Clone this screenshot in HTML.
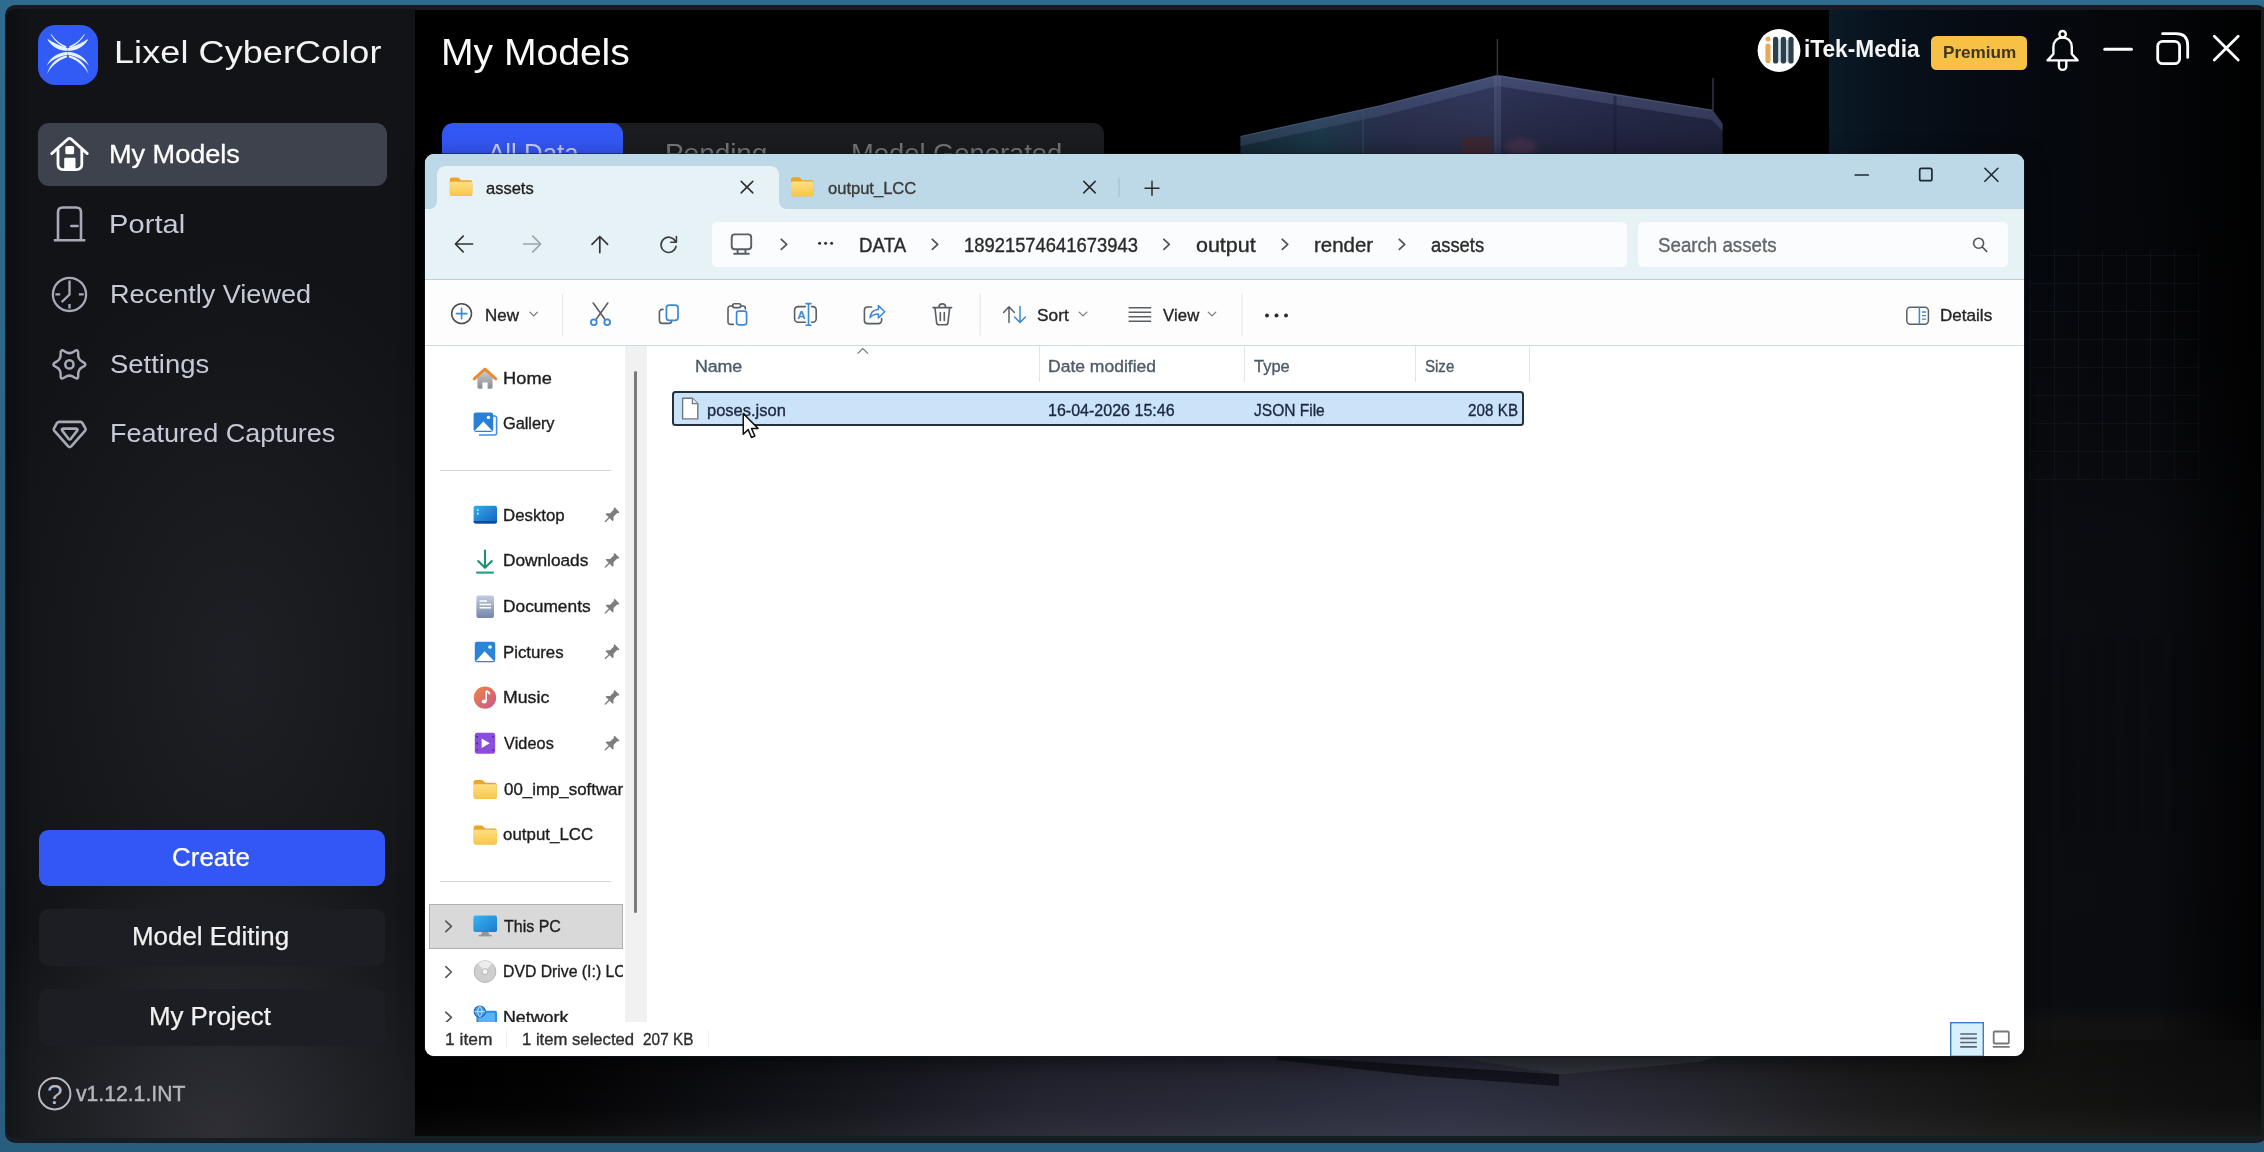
<!DOCTYPE html>
<html lang="en">
<head>
<meta charset="utf-8">
<title>Lixel CyberColor - My Models</title>
<style>
*{box-sizing:border-box;margin:0;padding:0}
html,body{width:2264px;height:1152px;overflow:hidden}
body{position:relative;background:linear-gradient(180deg,#2f6b8e 0,#2c6588 40%,#295d7d 100%);font-family:"Liberation Sans",sans-serif;}
.abs{position:absolute}
.t{position:absolute;white-space:nowrap;line-height:normal;font-family:"Liberation Sans",sans-serif}
svg{position:absolute;overflow:visible}
#ex .t{-webkit-text-stroke:.36px}
/* ---------- explorer ---------- */
#ex{position:absolute;left:425px;top:154.3px;width:1599.2px;height:901.6px;border-radius:9px;background:#fff;overflow:hidden;box-shadow:0 0 0 1px rgba(20,30,40,.55),0 6px 22px rgba(0,0,0,.55)}
</style>
</head>
<body>
<!-- ================= Lixel CyberColor application window ================= -->
<div id="frame" class="abs" style="left:5px;top:5px;width:2262px;height:1138px;border-radius:10px;background:#171c22"></div>
<div id="side" class="abs" style="left:6px;top:9px;width:409px;height:1129px;border-radius:9px 0 0 9px;background:#121317;overflow:hidden"><div class="abs" style="left:-6px;top:-9px;width:2264px;height:1152px">
<div class="abs" style="left:6px;top:9px;width:409px;height:1129px;background:radial-gradient(ellipse 270px 300px at 215px 1129px,rgba(76,76,84,.5),rgba(76,76,84,0) 100%),radial-gradient(ellipse 260px 420px at 230px 660px,rgba(60,61,68,.3),rgba(60,61,68,0) 100%),linear-gradient(90deg,rgba(0,0,0,.25),rgba(0,0,0,0) 30px)"></div>
<div class="abs" style="left:38px;top:123.4px;width:349px;height:62.8px;border-radius:11px;background:#3e424c"></div>
<div class="abs" style="left:38.5px;top:829.6px;width:346px;height:56.6px;border-radius:9.5px;background:#3357f4"></div>
<div class="abs" style="left:38.5px;top:909px;width:346px;height:56.6px;border-radius:9.5px;background:#1d1e23"></div>
<div class="abs" style="left:38.5px;top:989px;width:346px;height:56.6px;border-radius:9.5px;background:#1d1e23"></div>
<span class="t" style="left:114.1px;top:35.4px;font-size:31px;color:#f3f3f3;letter-spacing:0.09px;transform:scaleX(1.16);transform-origin:0 0">Lixel CyberColor</span>
<span class="t" style="left:109.1px;top:140.0px;font-size:25px;color:#ffffff;letter-spacing:-0.02px;-webkit-text-stroke:.3px #fff;transform:scaleX(1.084);transform-origin:0 0">My Models</span>
<span class="t" style="left:109.1px;top:210.2px;font-size:25px;color:#c6cad7;letter-spacing:0.09px;transform:scaleX(1.16);transform-origin:0 0">Portal</span>
<span class="t" style="left:109.5px;top:279.6px;font-size:25px;color:#c6cad7;letter-spacing:-0.02px;transform:scaleX(1.084);transform-origin:0 0">Recently Viewed</span>
<span class="t" style="left:109.8px;top:349.6px;font-size:25px;color:#c6cad7;transform:scaleX(1.098);transform-origin:0 0">Settings</span>
<span class="t" style="left:109.5px;top:419.0px;font-size:25px;color:#c6cad7;letter-spacing:-0.01px;transform:scaleX(1.082);transform-origin:0 0">Featured Captures</span>
<span class="t" style="left:172.2px;top:843.1px;font-size:25.5px;color:#ffffff;letter-spacing:0.02px;-webkit-text-stroke:.25px;transform:scaleX(1.017);transform-origin:0 0">Create</span>
<span class="t" style="left:132.4px;top:922.1px;font-size:25.5px;color:#f1f1f1;letter-spacing:0.01px;-webkit-text-stroke:.25px;transform:scaleX(1.016);transform-origin:0 0">Model Editing</span>
<span class="t" style="left:149.1px;top:1001.5px;font-size:25.5px;color:#f1f1f1;letter-spacing:-0.02px;-webkit-text-stroke:.25px;transform:scaleX(1.014);transform-origin:0 0">My Project</span>
<span class="t" style="left:76.3px;top:1081.1px;font-size:22.5px;color:#b3b6bf;-webkit-text-stroke:.45px #b3b6bf;transform:scaleX(0.94);transform-origin:0 0">v1.12.1.INT</span>
</div></div>
<div id="main" class="abs" style="left:415px;top:10px;width:1846px;height:1126px;background:#000;overflow:hidden"><div class="abs" style="left:-415px;top:-10px;width:2264px;height:1152px">
<div class="abs" style="left:1829px;top:10px;width:432px;height:1126px;background:linear-gradient(90deg,#0b1a27 0,#08121c 12%,#060b12 35%,#05070b 65%,#030405 100%)"></div>
<div class="abs" style="left:1829px;top:10px;width:432px;height:1126px;background:linear-gradient(180deg,rgba(0,0,0,0) 0,rgba(0,0,0,0) 14%,rgba(8,8,11,.5) 40%,rgba(12,12,14,.62) 100%)"></div>
<div class="abs" style="left:2030px;top:250px;width:170px;height:230px;opacity:.5;background:repeating-linear-gradient(90deg,rgba(40,48,58,.55) 0 1px,rgba(0,0,0,0) 1px 24px),repeating-linear-gradient(0deg,rgba(40,48,58,.55) 0 1px,rgba(0,0,0,0) 1px 28px);filter:blur(.6px)"></div>
<div class="abs" style="left:2024px;top:330px;width:237px;height:725px;background:linear-gradient(180deg,rgba(16,18,24,0) 0,rgba(16,18,24,.2) 16%,rgba(16,18,24,.45) 30%,rgba(13,15,20,.45) 93%,rgba(19,19,18,.9) 96%,rgba(19,19,18,.9) 100%)"></div>
<div class="abs" style="left:2040px;top:640px;width:150px;height:190px;opacity:.22;background:repeating-linear-gradient(90deg,rgba(8,8,10,.9) 0 9px,rgba(0,0,0,0) 9px 22px);filter:blur(1.5px)"></div>
<div class="abs" style="left:2150px;top:10px;width:111px;height:1126px;background:linear-gradient(90deg,rgba(0,0,0,0),rgba(0,0,0,.35) 45%,rgba(0,0,0,.8))"></div>
<div class="abs" style="left:415px;top:1040px;width:1846px;height:96px;background:linear-gradient(90deg,#000 0,#040405 8%,#101116 18%,#1a1b23 26%,#252632 34%,#2b2c3a 45%,#303244 56%,#2c2d3a 64%,#27282f 71%,#1e1e20 78%,#161615 86%,#0e0e0e 100%)"></div>
<div class="abs" style="left:415px;top:1040px;width:1846px;height:96px;background:linear-gradient(180deg,rgba(0,0,0,.22) 0,rgba(0,0,0,.15) 30%,rgba(0,0,0,.03) 70%,rgba(255,255,255,.035) 100%)"></div>
<svg width="2264" height="1152" viewBox="0 0 2264 1152" style="left:0;top:0;filter:blur(.7px)"><defs><linearGradient id="bg1" x1="1240" y1="0" x2="1498" y2="0" gradientUnits="userSpaceOnUse"><stop offset="0" stop-color="#1a3646"/><stop offset=".3" stop-color="#22465a"/><stop offset=".48" stop-color="#2c3a58"/><stop offset=".62" stop-color="#31375a"/><stop offset="1" stop-color="#343b5f"/></linearGradient><linearGradient id="bg2" x1="1498" y1="0" x2="1724" y2="0" gradientUnits="userSpaceOnUse"><stop offset="0" stop-color="#2f3558"/><stop offset=".5" stop-color="#2a2e50"/><stop offset="1" stop-color="#262a48"/></linearGradient><linearGradient id="fade" x1="0" y1="76" x2="0" y2="156" gradientUnits="userSpaceOnUse"><stop offset="0" stop-color="#000" stop-opacity="0"/><stop offset="1" stop-color="#000" stop-opacity=".28"/></linearGradient></defs><path d="M1240.5,156 V136.5 L1381,105.5 L1497.4,75.4 V156 Z" fill="url(#bg1)"/><path d="M1497.4,75.4 L1713,110.4 L1722.5,123.5 V156 H1497.4 Z" fill="url(#bg2)"/><path d="M1240.5,136.5 L1381,105.5 L1497.4,75.4 V86 L1381,116 L1240.5,146 Z" fill="#5d6f9c" opacity=".38"/><path d="M1497.4,75.4 L1713,110.4 L1722.5,123.5 V131 L1712,120 L1497.4,86 Z" fill="#6a74a2" opacity=".34"/><path d="M1240.5,136.5 L1381,105.5 L1497.4,75.4 L1713,110.4" fill="none" stroke="#6f7fa6" stroke-width="1.2" opacity=".55"/><path d="M1494,76 h7 V156 h-7z" fill="#59628a" opacity=".5"/><path d="M1615,96 v60" stroke="#1f2340" stroke-width="3" opacity=".6"/><path d="M1363,110 v46" stroke="#3b6078" stroke-width="2" opacity=".5"/><path d="M1240.5,156 V136.5 L1381,105.5 L1497.4,75.4 L1713,110.4 L1722.5,123.5 V156 Z" fill="url(#fade)"/><path d="M1497.4,39 V76 M1713,78 V111" stroke="#30323f" stroke-width="1.6"/><rect x="1462" y="137" width="30" height="19" fill="#3b2733"/><ellipse cx="1521" cy="147" rx="16" ry="9" fill="#6a3a52" opacity=".4" style="filter:blur(3px)"/><path d="M1277,1056 L1559,1074.5 V1086 L1420,1076 L1277,1060 Z" fill="#13141c"/><path d="M1440,1055 H1720 L1700,1062 L1561,1074.5 Z" fill="#353a40" opacity=".75"/></svg>
<div class="abs" style="left:442.4px;top:123.3px;width:661.6px;height:74px;border-radius:11px;background:#1b1c1f;overflow:hidden"><div class="abs" style="left:0;top:0;width:181px;height:74px;border-radius:11px;background:#3357f3"></div></div>
<div class="abs" style="left:1931.4px;top:36.4px;width:95.6px;height:34px;border-radius:5.5px;background:#f6c144"></div>
<span class="t" style="left:440.5px;top:31.5px;font-size:36px;color:#fbfbfb;letter-spacing:-0.02px;transform:scaleX(1.086);transform-origin:0 0">My Models</span>
<span class="t" style="left:487.7px;top:139.2px;font-size:25px;color:#c6cfff;letter-spacing:0.01px;transform:scaleX(1.035);transform-origin:0 0">All Data</span>
<span class="t" style="left:664.5px;top:139.2px;font-size:25px;color:#74767c;letter-spacing:-0.08px;transform:scaleX(1.122);transform-origin:0 0">Pending</span>
<span class="t" style="left:851.0px;top:139.2px;font-size:25px;color:#74767c;letter-spacing:-0.02px;transform:scaleX(1.095);transform-origin:0 0">Model Generated</span>
<span class="t" style="left:1804.2px;top:36.0px;font-size:23.5px;color:#f4f4f4;font-weight:700;transform:scaleX(0.966);transform-origin:0 0">iTek-Media</span>
<span class="t" style="left:1942.5px;top:43.4px;font-size:16.3px;color:#3d3521;font-weight:700;letter-spacing:-0.01px;transform:scaleX(1.053);transform-origin:0 0">Premium</span>
</div></div>
<!-- app icons -->
<svg width="2264" height="1152" viewBox="0 0 2264 1152" style="left:0;top:0">
<rect x="38" y="25" width="60" height="60" rx="17.5" fill="#325bf6"/><path d="M67.7,50.7 C61,51.4 52.6,47.9 47.4,39.6 L48.2,39.2 C52.4,42.2 58.5,45 67.7,48.2 Z" fill="#e6f2ff"/><path d="M67.90,50.70 C74.60,51.40 83.00,47.90 88.20,39.60 L87.40,39.20 C83.20,42.20 77.10,45.00 67.90,48.20 Z" fill="#e6f2ff"/><path d="M66,48.1 C60,45.6 54.6,41.2 50.7,34.6 L51.6,34.2 C55,39.6 59.6,43.4 66.4,46.2 Z" fill="#e6f2ff"/><path d="M69.60,48.10 C75.60,45.60 81.00,41.20 84.90,34.60 L84.00,34.20 C80.60,39.60 76.00,43.40 69.20,46.20 Z" fill="#e6f2ff"/><path d="M67.7,51.9 C58.5,52.1 50,57 46.7,65.8 C51,60.4 57.4,56.8 67.7,54.8 Z" fill="#e6f2ff"/><path d="M67.90,51.90 C77.10,52.10 85.60,57.00 88.90,65.80 C84.60,60.40 78.20,56.80 67.90,54.80 Z" fill="#e6f2ff"/><path d="M66.6,55.2 C57.6,57.1 50,63.3 47.1,74 C50.9,66.7 57,60.6 67,57.2 Z" fill="#e6f2ff"/><path d="M69.00,55.20 C78.00,57.10 85.60,63.30 88.50,74.00 C84.70,66.70 78.60,60.60 68.60,57.20 Z" fill="#e6f2ff"/>
<g fill="none" stroke="#fdfdff" stroke-width="2.8" stroke-linecap="round" stroke-linejoin="round"><path d="M51.7,153.6 L67.6,139.2 Q69.5,137.6 71.4,139.2 L87.3,153.6"/><path d="M58,149.5 V164.5 Q58,169.6 63.2,169.6 H76 Q81.8,169.6 81.8,164.5 V149.5"/></g><rect x="65.3" y="146" width="8.8" height="8.3" rx="1.6" fill="#fdfdff"/><rect x="64.2" y="157.7" width="11.3" height="12.6" rx="1" fill="#fdfdff"/>
<g fill="none" stroke="#a6a9b6" stroke-width="2.6" stroke-linecap="butt" stroke-linejoin="round"><path d="M58,240 V212.2 Q58,207.5 62.7,207.5 H76.3 Q81,207.5 81,212.2 V240"/><path d="M53.8,240.3 H85.3"/><path d="M71.3,226 H77.6" stroke-width="2.4" stroke-linecap="round"/></g>
<g fill="none" stroke="#a6a9b6" stroke-width="2.3" stroke-linecap="butt" stroke-linejoin="miter"><circle cx="69.5" cy="294.4" r="16.6"/><path d="M69.5,280.4 V294.6 L61.6,302.2"/><path d="M55.4,294.4 H60.2 M78.9,294.4 H83.7 M69.5,304 V308.6"/></g>
<g fill="none" stroke="#a6a9b6" stroke-width="2.5" stroke-linejoin="round"><path d="M82.9,362.0 Q88.0,364.4 82.9,366.8 Q77.7,369.2 78.2,374.9 Q78.7,380.5 74.1,377.3 Q69.4,374.0 64.8,377.3 Q60.1,380.5 60.6,374.9 Q61.1,369.2 55.9,366.8 Q50.8,364.4 55.9,362.0 Q61.1,359.6 60.6,353.9 Q60.1,348.3 64.8,351.5 Q69.4,354.8 74.1,351.5 Q78.7,348.3 78.2,353.9 Q77.7,359.6 82.9,362.0 Z"/><circle cx="69.4" cy="364.4" r="4.1"/></g>
<g fill="none" stroke="#a6a9b6" stroke-width="2.6" stroke-linejoin="round" stroke-linecap="round"><path d="M59,421.9 H80.4 Q81.6,421.9 82.4,423 L85.4,428.4 Q86,429.6 85.2,430.6 L71.2,446.4 Q69.7,447.8 68.2,446.4 L54.2,430.6 Q53.4,429.6 54,428.4 L57,423 Q57.8,421.9 59,421.9 Z"/><path d="M63.2,428.6 H76.2 Q78.2,428.8 77.2,430.6 L70.9,438.8 Q69.7,440.2 68.5,438.8 L62.2,430.6 Q61.2,428.8 63.2,428.6 Z"/></g>
<circle cx="54.7" cy="1093.7" r="15.7" fill="none" stroke="#b9bbc3" stroke-width="2"/><text x="54.9" y="1103.8" text-anchor="middle" font-family="Liberation Sans, sans-serif" font-size="28" fill="#b9bbc3">?</text>
<circle cx="1779" cy="50.5" r="21.4" fill="#fff"/><rect x="1777.6" y="40" width="3.6" height="22" fill="#d3e6f1"/><rect x="1785.6" y="40" width="3.2" height="22" fill="#c3d4de"/><rect x="1765.4" y="43.4" width="5.2" height="19.9" rx="2.4" fill="#e2ab5e"/><circle cx="1768" cy="38.9" r="2.5" fill="#e2ab5e"/><rect x="1773" y="36.7" width="5.2" height="26.8" rx="2.6" fill="#2e3f4c"/><rect x="1780.8" y="36.7" width="5.2" height="26.8" rx="2.6" fill="#2e3f4c"/><rect x="1788.4" y="36.7" width="5.2" height="26.8" rx="2.6" fill="#2e3f4c"/>
<g fill="none" stroke="#fff" stroke-width="2.4" stroke-linejoin="round" stroke-linecap="round"><circle cx="2062.6" cy="34.2" r="3.2"/><path d="M2053.4,54 V47 C2053.4,41.6 2057,37.6 2062.6,37.6 C2068.2,37.6 2071.8,41.6 2071.8,47 V54 L2077.6,60.4 H2047.6 Z"/><path d="M2058.9,61 V66.2 a3.7,3.7 0 0 0 7.4,0 V61"/></g>
<g fill="none" stroke="#fff" stroke-width="2.8" stroke-linecap="round"><path d="M2104.8,49.3 H2131.4" stroke-width="3"/><rect x="2157.7" y="41.4" width="21.9" height="22.3" rx="5"/><path d="M2162.6,33.7 H2176 Q2187.7,33.7 2187.7,45.5 V57.4"/><path d="M2214.3,36.3 L2238.2,59.9 M2238.2,36.3 L2214.3,59.9"/></g>
</svg>
<!-- ================= File Explorer window ================= -->
<div id="ex"><div class="abs" style="left:-425px;top:-154.3px;width:2264px;height:1152px">
<div class="abs" style="left:425px;top:154px;width:1599px;height:55.4px;background:#bdd9e7"></div>
<div class="abs" style="left:425px;top:209px;width:1599px;height:70.4px;background:#e7f2f7"></div>
<div class="abs" style="left:436.6px;top:166px;width:342px;height:44px;border-radius:8.5px 8.5px 0 0;background:#e7f2f7"></div>
<div class="abs" style="left:428.6px;top:201px;width:8px;height:8.4px;background:radial-gradient(circle at 0 0,rgba(231,242,247,0) 7.6px,#e7f2f7 8.4px)"></div>
<div class="abs" style="left:778.6px;top:201px;width:8px;height:8.4px;background:radial-gradient(circle at 100% 0,rgba(231,242,247,0) 7.6px,#e7f2f7 8.4px)"></div>
<div class="abs" style="left:425px;top:278.8px;width:1599px;height:1.4px;background:#bccfd9"></div>
<div class="abs" style="left:711.6px;top:222.3px;width:915px;height:44.4px;border-radius:5px;background:#fafcfd"></div>
<div class="abs" style="left:1638px;top:222.3px;width:370px;height:44.4px;border-radius:5px;background:#fafcfd"></div>
<div class="abs" style="left:425px;top:280.2px;width:1599px;height:65.4px;background:#fdfdfd"></div>
<div class="abs" style="left:425px;top:345.2px;width:1599px;height:1.2px;background:#cfd9df"></div>
<div class="abs" style="left:625px;top:346.4px;width:22.4px;height:675.6px;background:#f1f1f1"></div>
<div class="abs" style="left:634.2px;top:371px;width:3.2px;height:542px;border-radius:1.6px;background:#7b7b7b"></div>
<div class="abs" style="left:439.6px;top:469.8px;width:171.6px;height:1.2px;background:#d4d4d4"></div>
<div class="abs" style="left:439.6px;top:880.6px;width:171.6px;height:1.2px;background:#d4d4d4"></div>
<div class="abs" style="left:428.6px;top:903.6px;width:194.6px;height:45px;background:#d9d9d9;border:1.2px solid #b0b0b0"></div>
<div class="abs" style="left:1039.2px;top:346.4px;width:1.2px;height:36px;background:#e2e5e8"></div><div class="abs" style="left:1244px;top:346.4px;width:1.2px;height:36px;background:#e2e5e8"></div><div class="abs" style="left:1415px;top:346.4px;width:1.2px;height:36px;background:#e2e5e8"></div><div class="abs" style="left:1529px;top:346.4px;width:1.2px;height:36px;background:#e2e5e8"></div>
<div class="abs" style="left:672.4px;top:391.2px;width:852px;height:34.6px;border-radius:3.5px;background:#cbe3f8;border:2px solid #27313d"></div>
<div id="navpane" class="abs" style="left:425px;top:346.4px;width:198.4px;height:675.6px;overflow:hidden"><div class="abs" style="left:-425px;top:-346.4px;width:2264px;height:1152px">
<span class="t" style="left:502.7px;top:368.0px;font-size:17.4px;color:#1d1d1d;letter-spacing:0.06px;transform:scaleX(1.047);transform-origin:0 0">Home</span>
<span class="t" style="left:503.3px;top:413.4px;font-size:17.4px;color:#1d1d1d;letter-spacing:-0.05px;transform:scaleX(0.941);transform-origin:0 0">Gallery</span>
<span class="t" style="left:503.0px;top:504.6px;font-size:17.4px;color:#1d1d1d;letter-spacing:-0.02px;transform:scaleX(0.968);transform-origin:0 0">Desktop</span>
<span class="t" style="left:502.7px;top:550.2px;font-size:17.4px;color:#1d1d1d;letter-spacing:-0.03px;transform:scaleX(0.994);transform-origin:0 0">Downloads</span>
<span class="t" style="left:502.7px;top:596.1px;font-size:17.4px;color:#1d1d1d;letter-spacing:-0.01px;transform:scaleX(0.997);transform-origin:0 0">Documents</span>
<span class="t" style="left:503.0px;top:641.6px;font-size:17.4px;color:#1d1d1d;letter-spacing:-0.02px;transform:scaleX(0.966);transform-origin:0 0">Pictures</span>
<span class="t" style="left:502.7px;top:687.2px;font-size:17.4px;color:#1d1d1d;letter-spacing:0.01px;transform:scaleX(1.017);transform-origin:0 0">Music</span>
<span class="t" style="left:503.8px;top:732.9px;font-size:17.4px;color:#1d1d1d;letter-spacing:0.08px;transform:scaleX(0.936);transform-origin:0 0">Videos</span>
<span class="t" style="left:503.5px;top:778.6px;font-size:17.4px;color:#1d1d1d;letter-spacing:-0.01px;transform:scaleX(0.971);transform-origin:0 0">00_imp_software</span>
<span class="t" style="left:503.4px;top:824.3px;font-size:17.4px;color:#1d1d1d;letter-spacing:0.04px;transform:scaleX(0.968);transform-origin:0 0">output_LCC</span>
<span class="t" style="left:503.7px;top:915.8px;font-size:17.4px;color:#1d1d1d;letter-spacing:0.01px;transform:scaleX(0.919);transform-origin:0 0">This PC</span>
<span class="t" style="left:503.1px;top:961.4px;font-size:17.4px;color:#1d1d1d;letter-spacing:-0.01px;transform:scaleX(0.908);transform-origin:0 0">DVD Drive (I:) LC</span>
<span class="t" style="left:502.7px;top:1006.8px;font-size:17.4px;color:#1d1d1d;letter-spacing:-0.03px;transform:scaleX(1.027);transform-origin:0 0">Network</span>
</div></div>
<svg width="2264" height="1152" viewBox="0 0 2264 1152" style="left:0;top:0">
<defs><linearGradient id="fgrad" x1="0" y1="0" x2="0" y2="1"><stop offset="0" stop-color="#ffe083"/><stop offset="1" stop-color="#f8c646"/></linearGradient><linearGradient id="dgrad" x1="0" y1="0" x2="1" y2="1"><stop offset="0" stop-color="#2fb0ee"/><stop offset="1" stop-color="#155fba"/></linearGradient><linearGradient id="docgrad" x1="0" y1="0" x2="0" y2="1"><stop offset="0" stop-color="#c2cde0"/><stop offset="1" stop-color="#7485a8"/></linearGradient><linearGradient id="mgrad" x1="0" y1="0" x2="1" y2="1"><stop offset="0" stop-color="#ee8744"/><stop offset="1" stop-color="#c9558f"/></linearGradient><linearGradient id="hgrad" x1="0" y1="0" x2="0" y2="1"><stop offset="0" stop-color="#c9cdd2"/><stop offset="1" stop-color="#878c93"/></linearGradient><linearGradient id="pcgrad" x1="0" y1="0" x2="1" y2="1"><stop offset="0" stop-color="#37b6ee"/><stop offset="1" stop-color="#1b78d0"/></linearGradient></defs>
<g transform="translate(449.8,177.1) scale(0.978,1.000)"><path d="M0,2.6 Q0,0.4 2.2,0.4 H7.6 Q8.8,0.4 9.6,1.2 L11.6,3.2 H20.8 Q23,3.2 23,5.4 V16.6 Q23,19 20.8,19 H2.2 Q0,19 0,16.6 Z" fill="#e9a62d"/><rect x="0" y="4.6" width="23" height="14.4" rx="1.8" fill="url(#fgrad)"/></g><g transform="translate(791.0,176.9) scale(0.983,1.016)"><path d="M0,2.6 Q0,0.4 2.2,0.4 H7.6 Q8.8,0.4 9.6,1.2 L11.6,3.2 H20.8 Q23,3.2 23,5.4 V16.6 Q23,19 20.8,19 H2.2 Q0,19 0,16.6 Z" fill="#e9a62d"/><rect x="0" y="4.6" width="23" height="14.4" rx="1.8" fill="url(#fgrad)"/></g>
<path d="M741.2,181.4 L752.8,192.9 M752.8,181.4 L741.2,192.9" stroke="#2b2b2b" stroke-width="1.5" stroke-linecap="round"/><path d="M1083.8,181.4 L1095.2,192.9 M1095.2,181.4 L1083.8,192.9" stroke="#2b2b2b" stroke-width="1.5" stroke-linecap="round"/><path d="M1119,178 V197" stroke="#9fbccb" stroke-width="1"/><path d="M1145,188.2 H1159 M1152,181.2 V195.2" stroke="#2b2b2b" stroke-width="1.5" stroke-linecap="round"/>
<path d="M1855.2,175 H1868.4" stroke="#1f2830" stroke-width="1.6" stroke-linecap="round"/><rect x="1919.7" y="168.3" width="12.2" height="12.4" rx="1.8" fill="none" stroke="#1f2830" stroke-width="1.7"/><path d="M1984.9,168.3 L1997.9,181.3 M1997.9,168.3 L1984.9,181.3" stroke="#1f2830" stroke-width="1.6" stroke-linecap="round"/>
<g fill="none" stroke-width="1.7" stroke-linecap="round" stroke-linejoin="round"><path d="M472.6,244 H455.6 M463.2,236.2 L455.4,244 L463.2,251.8" stroke="#333"/><path d="M523.6,244 H540.4 M532.8,236.2 L540.6,244 L532.8,251.8" stroke="#9aa4aa"/><path d="M599.8,252.6 V236.6 M592,244.4 L599.8,236.5 L607.6,244.4" stroke="#333"/><path d="M675.7,242 A7.6,7.6 0 1 0 676.1,246.2 M676.4,236.6 V242.2 H670.8" stroke="#3d3d3d" stroke-width="1.6"/></g>
<g fill="none" stroke="#5a5e62" stroke-width="1.9" stroke-linejoin="round"><rect x="731.7" y="234.4" width="19.5" height="14.9" rx="3"/><path d="M737.6,249.6 V253.4 M745.4,249.6 V253.4"/><path d="M734.2,253.7 H748.8" stroke-linecap="round"/></g>
<path d="M781.3,239.3 L786.7,244.3 L781.3,249.3" fill="none" stroke="#555" stroke-width="1.8" stroke-linecap="round" stroke-linejoin="round"/><path d="M932.3,239.3 L937.7,244.3 L932.3,249.3" fill="none" stroke="#555" stroke-width="1.8" stroke-linecap="round" stroke-linejoin="round"/><path d="M1163.9,239.3 L1169.3,244.3 L1163.9,249.3" fill="none" stroke="#555" stroke-width="1.8" stroke-linecap="round" stroke-linejoin="round"/><path d="M1282.3,239.3 L1287.7,244.3 L1282.3,249.3" fill="none" stroke="#555" stroke-width="1.8" stroke-linecap="round" stroke-linejoin="round"/><path d="M1399.3,239.3 L1404.7,244.3 L1399.3,249.3" fill="none" stroke="#555" stroke-width="1.8" stroke-linecap="round" stroke-linejoin="round"/><circle cx="819.6" cy="243.2" r="1.5" fill="#333"/><circle cx="825.6" cy="243.2" r="1.5" fill="#333"/><circle cx="831.6" cy="243.2" r="1.5" fill="#333"/>
<g fill="none" stroke="#555" stroke-width="1.6" stroke-linecap="round"><circle cx="1978.6" cy="243.2" r="5"/><path d="M1982.3,247 L1986.6,251.4"/></g>
<circle cx="461.6" cy="313.6" r="9.9" fill="none" stroke="#4b4b4b" stroke-width="1.5"/><path d="M456.4,313.6 H466.8 M461.6,308.4 V318.8" stroke="#3b88d6" stroke-width="1.6" stroke-linecap="round"/><path d="M529.9,312.1 L533.7,315.9 L537.5,312.1" fill="none" stroke="#7a7a7a" stroke-width="1.3" stroke-linecap="round" stroke-linejoin="round"/><path d="M1079.2,312.1 L1083.0,315.9 L1086.8,312.1" fill="none" stroke="#7a7a7a" stroke-width="1.3" stroke-linecap="round" stroke-linejoin="round"/><path d="M1208.2,312.1 L1212.0,315.9 L1215.8,312.1" fill="none" stroke="#7a7a7a" stroke-width="1.3" stroke-linecap="round" stroke-linejoin="round"/><path d="M562.6,294 V335.5" stroke="#e4e4e4" stroke-width="1"/><path d="M980.2,294 V335.5" stroke="#e4e4e4" stroke-width="1"/><path d="M1242,294 V335.5" stroke="#e4e4e4" stroke-width="1"/>
<g fill="none" stroke-linecap="round" stroke-linejoin="round" stroke-width="1.6"><path d="M593.2,303 L605.4,320 M607.8,303 L595.6,320" stroke="#5a5f64"/><circle cx="593.8" cy="322.2" r="2.9" stroke="#3b88d6" stroke-width="1.8"/><circle cx="607.2" cy="322.2" r="2.9" stroke="#3b88d6" stroke-width="1.8"/><path d="M663,309.4 H662.2 A2.8,2.8 0 0 0 659.4,312.2 V320.6 A2.8,2.8 0 0 0 662.2,323.4 H669 A2.8,2.8 0 0 0 671.6,321.6" stroke="#5a5f64"/><rect x="666.4" y="305.2" width="11.6" height="15.2" rx="2.8" stroke="#3b88d6" stroke-width="1.7"/><path d="M733,306 H730.4 A2.4,2.4 0 0 0 728,308.4 V322 A2.4,2.4 0 0 0 730.4,324.4 H733.4 M740.6,306 H743 A2.4,2.4 0 0 1 745.4,308.4 V309" stroke="#5a5f64"/><rect x="732.6" y="303.8" width="8.2" height="3.8" rx="1.8" stroke="#5a5f64"/><rect x="736.6" y="311.2" width="10" height="13.6" rx="2.2" stroke="#3b88d6" stroke-width="1.7" fill="#fff"/><path d="M805.4,306.6 H798 A3.4,3.4 0 0 0 794.6,310 V318.8 A3.4,3.4 0 0 0 798,322.2 H805.4 M811.6,306.6 H812.8 A3.4,3.4 0 0 1 816.2,310 V318.8 A3.4,3.4 0 0 1 812.8,322.2 H811.6" stroke="#5a5f64"/><path d="M808.5,304 V324.8 M806,303.6 H811 M806,325.2 H811" stroke="#3b88d6"/><path d="M871.6,307 H867.6 A3.2,3.2 0 0 0 864.4,310.2 V320.4 A3.2,3.2 0 0 0 867.6,323.6 H878.4 A3.2,3.2 0 0 0 881.6,320.4 V318.6" stroke="#5a5f64"/><path d="M870,317.6 C870.6,312.4 874,309.8 878.4,309.6 V305.6 L884.6,311.8 L878.4,318 V314 C874.6,314 872.2,315 870,317.6 Z" stroke="#3b88d6" stroke-width="1.5"/><path d="M933,307.6 H951.6 M939,307.2 A3.3,3.3 0 0 1 945.6,307.2 M935,308.2 L936.6,322.6 A2.5,2.5 0 0 0 939.1,324.8 H945.5 A2.5,2.5 0 0 0 948,322.6 L949.6,308.2 M940.3,312.6 V320.4 M944.3,312.6 V320.4" stroke="#5a5f64"/><path d="M1009,322.6 V307 M1003.6,312.4 L1009,306.8 L1014.4,312.4" stroke="#5a5f64" stroke-width="1.5"/><path d="M1020,306.6 V322.4 M1014.6,317 L1020,322.6 L1025.4,317" stroke="#3b88d6" stroke-width="1.5"/><path d="M1128.6,307.7 H1151.2 M1128.6,312.2 H1151.2 M1128.6,316.7 H1151.2 M1128.6,321.2 H1151.2" stroke="#5a5f64" stroke-width="1.5" stroke-linecap="butt"/><rect x="1906.8" y="307.2" width="21.6" height="17" rx="3.6" stroke="#5a5f64" stroke-width="1.5"/><path d="M1919.4,307.4 V324" stroke="#3b88d6" stroke-width="1.5"/><path d="M1922.4,312 H1925.6 M1922.4,315.6 H1925.6 M1922.4,319.2 H1925.6" stroke="#3b88d6" stroke-width="1.3"/></g><text x="797.2" y="319.2" font-family="Liberation Sans, sans-serif" font-size="11.5" font-weight="700" fill="#3b88d6">A</text><circle cx="1267" cy="315.4" r="2" fill="#2b2b2b"/><circle cx="1276.5" cy="315.4" r="2" fill="#2b2b2b"/><circle cx="1286" cy="315.4" r="2" fill="#2b2b2b"/>
<path d="M857.6,353.6 L862.8,348.6 L868,353.6" fill="none" stroke="#777" stroke-width="1.2"/>
<path d="M682.6,398.3 H692.4 L697.8,403.7 V418.9 H682.6 Z" fill="#fff" stroke="#6c7782" stroke-width="1.4" stroke-linejoin="round"/><path d="M692.4,398.3 V403.7 H697.8" fill="#e8edf1" stroke="#6c7782" stroke-width="1.2" stroke-linejoin="round"/>
<path d="M477.4,377.6 V387 Q477.4,388.8 479.2,388.8 H482.4 V382.4 H487.6 V388.8 H490.8 Q492.6,388.8 492.6,387 V377.6 L485,371 Z" fill="url(#hgrad)"/><path d="M474.2,378.8 L485,369.2 L495.8,378.8" fill="none" stroke="#e98a2f" stroke-width="3" stroke-linecap="round" stroke-linejoin="round"/>
<path d="M479,416 H494.6 Q496.6,416 496.6,418 V433 Q496.6,435 494.6,435 H479" fill="none" stroke="#3f8fe0" stroke-width="1.6"/><rect x="473.6" y="412.4" width="19.6" height="19.6" rx="2.4" fill="#2a7fd9"/><path d="M474.6,430.8 L483.4,421.4 L492.2,430.8 Z" fill="#fff"/><circle cx="488.4" cy="417.4" r="1.7" fill="#fff"/>
<rect x="473.6" y="505.8" width="23.4" height="17.8" rx="2" fill="url(#dgrad)"/><path d="M477,510 h1.6 M477,513.6 h1.6" stroke="#e8f6ff" stroke-width="1.6"/><path d="M473.6,521 H497 V521.6 Q497,523.6 495,523.6 H475.6 Q473.6,523.6 473.6,521.6 Z" fill="#0f4a9e"/>
<g fill="none" stroke="#1c9270" stroke-width="2.1" stroke-linecap="round" stroke-linejoin="round"><path d="M485,550.6 V567.4 M478.2,561 L485,567.8 L491.8,561"/><path d="M477,572.6 H493" stroke="#2aa38a"/></g>
<rect x="476.4" y="595.4" width="17.6" height="22.6" rx="2" fill="url(#docgrad)"/><path d="M479.6,601 H487 M479.6,604.4 H491 M479.6,607.8 H491" stroke="#fff" stroke-width="1.5"/>
<rect x="474.8" y="641.8" width="20.4" height="20.4" rx="2.2" fill="#2b84dc"/><path d="M476,661 L484.6,651.2 L494,661 Z" fill="#fff"/><circle cx="490" cy="647" r="1.8" fill="#fff"/>
<circle cx="485" cy="697.6" r="11.2" fill="url(#mgrad)"/><path d="M486.2,691 V701" stroke="#fff" stroke-width="1.6"/><ellipse cx="484.2" cy="701.4" rx="2.5" ry="2" fill="#fff"/><path d="M486.2,691 Q489.4,691.6 489.6,694.4" fill="none" stroke="#fff" stroke-width="1.6"/>
<rect x="474.8" y="732.8" width="20.4" height="21" rx="2.4" fill="#8b4ddb"/><path d="M481.6,738.6 V748 L489.8,743.3 Z" fill="#fff"/><path d="M477,736 v1.6 M477,742.6 v1.6 M477,749.2 v1.6 M493,736 v1.6 M493,749.2 v1.6" stroke="#4b2490" stroke-width="1.6"/>
<g transform="translate(473.6,779.6) scale(1.009,1.011)"><path d="M0,2.6 Q0,0.4 2.2,0.4 H7.6 Q8.8,0.4 9.6,1.2 L11.6,3.2 H20.8 Q23,3.2 23,5.4 V16.6 Q23,19 20.8,19 H2.2 Q0,19 0,16.6 Z" fill="#e9a62d"/><rect x="0" y="4.6" width="23" height="14.4" rx="1.8" fill="url(#fgrad)"/></g><g transform="translate(473.6,825.2) scale(1.009,1.011)"><path d="M0,2.6 Q0,0.4 2.2,0.4 H7.6 Q8.8,0.4 9.6,1.2 L11.6,3.2 H20.8 Q23,3.2 23,5.4 V16.6 Q23,19 20.8,19 H2.2 Q0,19 0,16.6 Z" fill="#e9a62d"/><rect x="0" y="4.6" width="23" height="14.4" rx="1.8" fill="url(#fgrad)"/></g>
<rect x="473.4" y="915.6" width="23.6" height="16.4" rx="1.8" fill="url(#pcgrad)"/><path d="M482,932 h6.4 l0.8,3 h-8 z" fill="#8e979f"/><path d="M478.6,935.6 H491.8" stroke="#8e979f" stroke-width="1.5"/>
<circle cx="485" cy="971.6" r="10.8" fill="#cfcfcf"/><circle cx="485" cy="971.6" r="10.8" fill="none" stroke="#b5b5b5" stroke-width="1"/><path d="M485,971.6 L478,963.4 A10.8,10.8 0 0 1 492,963.4 Z" fill="#ededed"/><circle cx="485" cy="971.6" r="3" fill="#f4f4f4" stroke="#aaa" stroke-width=".8"/>
<rect x="476.4" y="1010.8" width="20.6" height="14" rx="1.6" fill="#2f8fe0"/><rect x="478.4" y="1012.8" width="16.6" height="10" fill="#56b4f0"/><circle cx="479.8" cy="1011.6" r="5.6" fill="#3f9fe8" stroke="#1d62b6" stroke-width="1.1"/><path d="M474.4,1011.6 H485.2 M479.8,1006.2 C477,1009 477,1014.2 479.8,1017 C482.6,1014.2 482.6,1009 479.8,1006.2" fill="none" stroke="#cfe9fb" stroke-width=".9"/>
<g transform="translate(611.4,515.4) rotate(45)" fill="#7d7d7d"><path d="M-3.4,-8 H3.4 V-6.6 L2.4,-5.8 V-0.6 L5,2 V3.2 H0.7 V8.6 L0,9.6 L-0.7,8.6 V3.2 H-5 V2 L-2.4,-0.6 V-5.8 L-3.4,-6.6 Z"/></g><g transform="translate(611.4,561.0) rotate(45)" fill="#7d7d7d"><path d="M-3.4,-8 H3.4 V-6.6 L2.4,-5.8 V-0.6 L5,2 V3.2 H0.7 V8.6 L0,9.6 L-0.7,8.6 V3.2 H-5 V2 L-2.4,-0.6 V-5.8 L-3.4,-6.6 Z"/></g><g transform="translate(611.4,606.8) rotate(45)" fill="#7d7d7d"><path d="M-3.4,-8 H3.4 V-6.6 L2.4,-5.8 V-0.6 L5,2 V3.2 H0.7 V8.6 L0,9.6 L-0.7,8.6 V3.2 H-5 V2 L-2.4,-0.6 V-5.8 L-3.4,-6.6 Z"/></g><g transform="translate(611.4,652.4) rotate(45)" fill="#7d7d7d"><path d="M-3.4,-8 H3.4 V-6.6 L2.4,-5.8 V-0.6 L5,2 V3.2 H0.7 V8.6 L0,9.6 L-0.7,8.6 V3.2 H-5 V2 L-2.4,-0.6 V-5.8 L-3.4,-6.6 Z"/></g><g transform="translate(611.4,698.0) rotate(45)" fill="#7d7d7d"><path d="M-3.4,-8 H3.4 V-6.6 L2.4,-5.8 V-0.6 L5,2 V3.2 H0.7 V8.6 L0,9.6 L-0.7,8.6 V3.2 H-5 V2 L-2.4,-0.6 V-5.8 L-3.4,-6.6 Z"/></g><g transform="translate(611.4,743.7) rotate(45)" fill="#7d7d7d"><path d="M-3.4,-8 H3.4 V-6.6 L2.4,-5.8 V-0.6 L5,2 V3.2 H0.7 V8.6 L0,9.6 L-0.7,8.6 V3.2 H-5 V2 L-2.4,-0.6 V-5.8 L-3.4,-6.6 Z"/></g>
<path d="M445.8,921.1 L451.4,926.4 L445.8,931.7" fill="none" stroke="#555" stroke-width="1.6" stroke-linecap="round" stroke-linejoin="round"/><path d="M445.8,966.7 L451.4,972.0 L445.8,977.3" fill="none" stroke="#555" stroke-width="1.6" stroke-linecap="round" stroke-linejoin="round"/><path d="M445.8,1012.1 L451.4,1017.4 L445.8,1022.7" fill="none" stroke="#555" stroke-width="1.6" stroke-linecap="round" stroke-linejoin="round"/>
<rect x="425" y="1022" width="1600" height="36" fill="#fff"/><path d="M506.5,1030 V1048 M708.5,1030 V1048" stroke="#f1f1f1" stroke-width="1"/><rect x="1950.7" y="1022.7" width="32.6" height="33.6" fill="#d8effc" stroke="#3f7cbc" stroke-width="1.4"/><path d="M1960.2,1034 H1976.9 M1960.2,1038.3 H1976.9 M1960.2,1042.5 H1976.9 M1960.2,1046.8 H1976.9" stroke="#5b6570" stroke-width="1.7"/><rect x="1993.7" y="1031.5" width="15.1" height="12" rx="1" fill="none" stroke="#777" stroke-width="1.8"/><path d="M1992.8,1046.9 H2009.7" stroke="#777" stroke-width="1.6"/>
</svg>
<span class="t" style="left:486.2px;top:178.4px;font-size:17.2px;color:#1e1e1e;letter-spacing:-0.02px;transform:scaleX(0.961);transform-origin:0 0">assets</span>
<span class="t" style="left:828.1px;top:178.4px;font-size:17.2px;color:#3b3b3b;letter-spacing:-0.03px;transform:scaleX(0.965);transform-origin:0 0">output_LCC</span>
<span class="t" style="left:859.0px;top:233.8px;font-size:19.7px;color:#2a2a2a;letter-spacing:0.12px;transform:scaleX(0.945);transform-origin:0 0">DATA</span>
<span class="t" style="left:963.7px;top:233.8px;font-size:19.7px;color:#2a2a2a;transform:scaleX(0.934);transform-origin:0 0">18921574641673943</span>
<span class="t" style="left:1196.3px;top:233.8px;font-size:19.7px;color:#2a2a2a;letter-spacing:-0.01px;transform:scaleX(1.09);transform-origin:0 0">output</span>
<span class="t" style="left:1313.7px;top:233.8px;font-size:19.7px;color:#2a2a2a;letter-spacing:0.01px;transform:scaleX(1.039);transform-origin:0 0">render</span>
<span class="t" style="left:1431.4px;top:233.8px;font-size:19.7px;color:#2a2a2a;letter-spacing:0.01px;transform:scaleX(0.933);transform-origin:0 0">assets</span>
<span class="t" style="left:1657.8px;top:233.6px;font-size:19.7px;color:#62676b;letter-spacing:0.00px;transform:scaleX(0.95);transform-origin:0 0">Search assets</span>
<span class="t" style="left:485.0px;top:306.2px;font-size:16.4px;color:#252525;letter-spacing:0.05px;transform:scaleX(1.033);transform-origin:0 0">New</span>
<span class="t" style="left:1036.6px;top:306.2px;font-size:16.4px;color:#252525;letter-spacing:0.10px;transform:scaleX(1.05);transform-origin:0 0">Sort</span>
<span class="t" style="left:1162.8px;top:306.2px;font-size:16.4px;color:#252525;letter-spacing:0.13px;transform:scaleX(1.018);transform-origin:0 0">View</span>
<span class="t" style="left:1939.7px;top:306.2px;font-size:16.4px;color:#252525;letter-spacing:0.01px;transform:scaleX(1.04);transform-origin:0 0">Details</span>
<span class="t" style="left:694.7px;top:355.6px;font-size:17.4px;color:#4d5a69;letter-spacing:-0.10px;transform:scaleX(1.025);transform-origin:0 0">Name</span>
<span class="t" style="left:1047.7px;top:355.6px;font-size:17.4px;color:#4d5a69;transform:scaleX(1.007);transform-origin:0 0">Date modified</span>
<span class="t" style="left:1253.7px;top:355.6px;font-size:17.4px;color:#4d5a69;letter-spacing:0.02px;transform:scaleX(0.947);transform-origin:0 0">Type</span>
<span class="t" style="left:1424.7px;top:355.6px;font-size:17.4px;color:#4d5a69;letter-spacing:-0.03px;transform:scaleX(0.868);transform-origin:0 0">Size</span>
<span class="t" style="left:706.6px;top:399.6px;font-size:17.4px;color:#1c2740;letter-spacing:-0.01px;transform:scaleX(0.949);transform-origin:0 0">poses.json</span>
<span class="t" style="left:1047.8px;top:399.6px;font-size:17.4px;color:#1c2740;transform:scaleX(0.922);transform-origin:0 0">16-04-2026 15:46</span>
<span class="t" style="left:1253.7px;top:399.6px;font-size:17.4px;color:#1c2740;letter-spacing:-0.01px;transform:scaleX(0.894);transform-origin:0 0">JSON File</span>
<span class="t" style="left:1468.4px;top:399.6px;font-size:17.4px;color:#1c2740;letter-spacing:0.08px;transform:scaleX(0.871);transform-origin:0 0">208 KB</span>
<span class="t" style="left:445.2px;top:1029.2px;font-size:17.2px;color:#2e2e2e;letter-spacing:0.04px;transform:scaleX(1.011);transform-origin:0 0">1 item</span>
<span class="t" style="left:522.1px;top:1029.2px;font-size:17.2px;color:#2e2e2e;transform:scaleX(0.97);transform-origin:0 0">1 item selected</span>
<span class="t" style="left:642.8px;top:1029.2px;font-size:17.2px;color:#2e2e2e;letter-spacing:0.04px;transform:scaleX(0.893);transform-origin:0 0">207 KB</span>
</div></div>
<svg width="20" height="28" viewBox="0 0 16 22" style="left:742.4px;top:411.6px"><path d="M1,1 V17.6 L4.9,13.9 L7.6,20.2 L10.3,19 L7.6,12.9 H12.8 Z" fill="#fff" stroke="#111" stroke-width="1.2" stroke-linejoin="round"/></svg>
</body>
</html>
